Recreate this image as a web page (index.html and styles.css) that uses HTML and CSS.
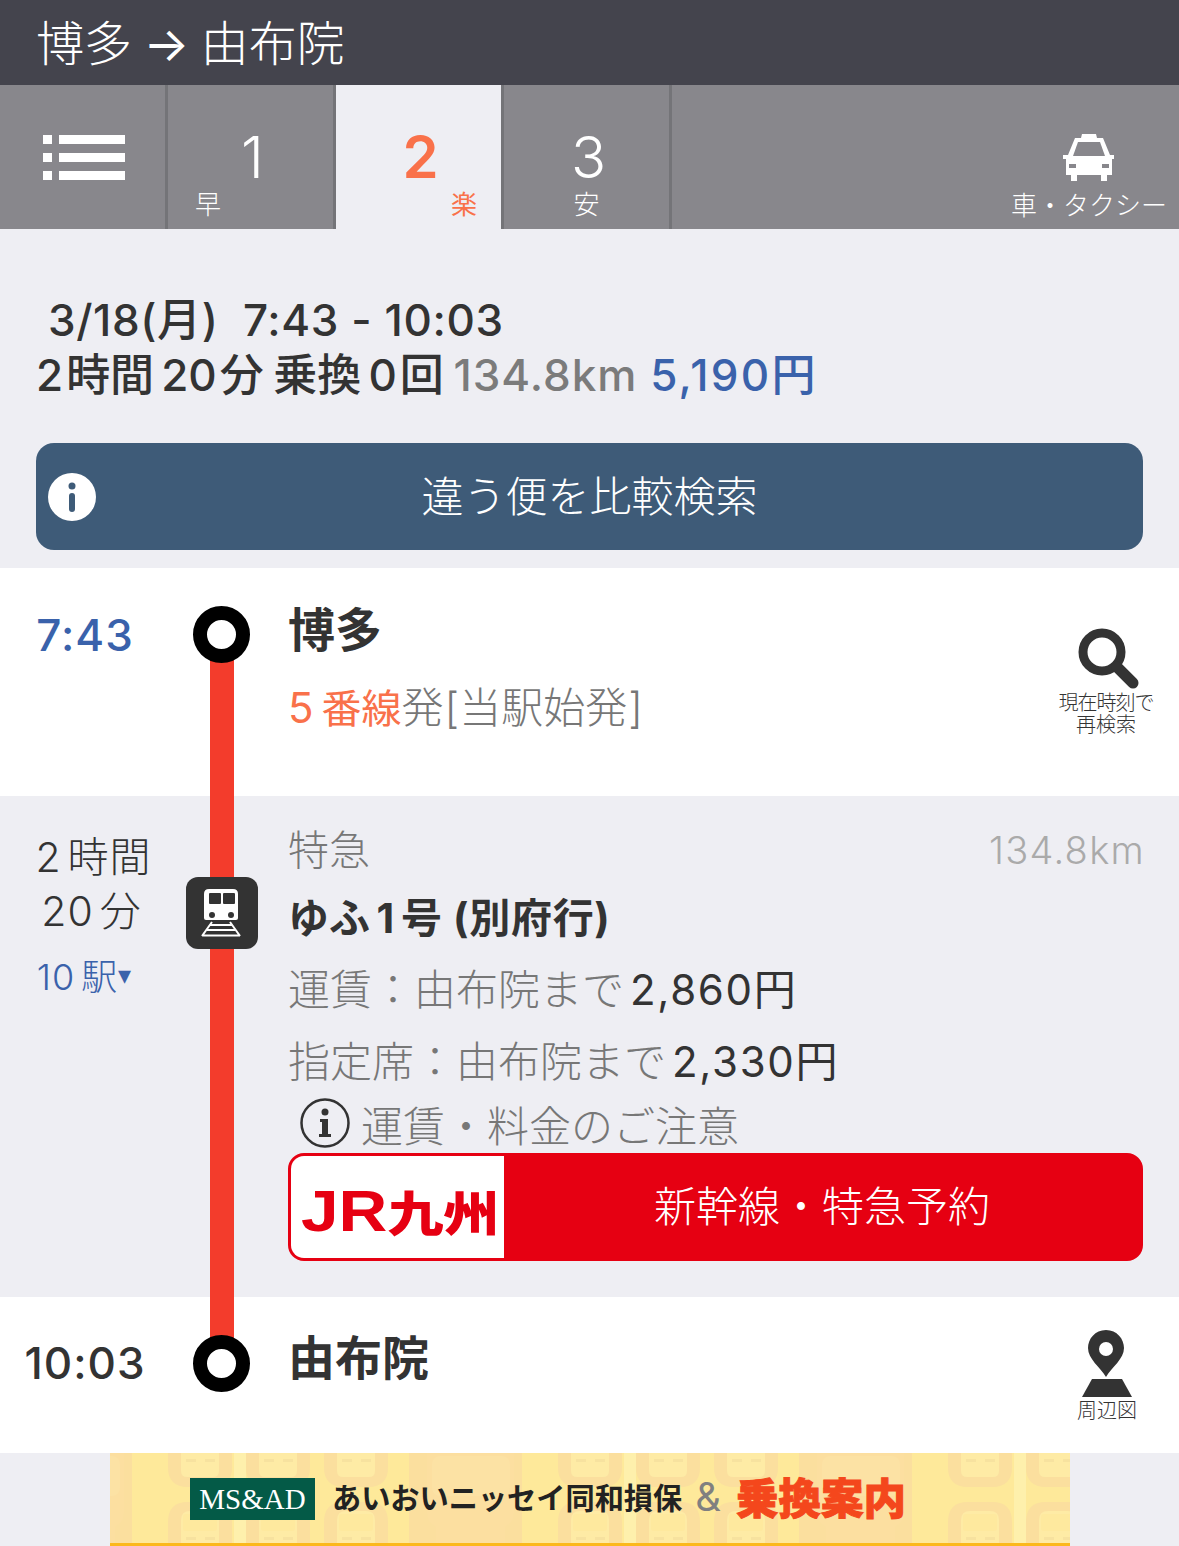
FILE: index.html
```html
<!DOCTYPE html>
<html lang="ja">
<head>
    <meta charset="UTF-8">
    <meta name="viewport" content="width=device-width, initial-scale=1.0">
    <title>博多 → 由布院</title>
    <link rel="stylesheet" href="styles.css">
</head>

<body>
    <header class="top-bar">博多 <span class="top-arrow">→</span> 由布院</header>

    <nav class="tabs">
        <div class="tab tab-menu">
            <svg width="82" height="46" viewBox="0 0 82 46" fill="#fff">
                <rect x="0" y="0" width="9" height="9"/>
                <rect x="16" y="0" width="66" height="9"/>
                <rect x="0" y="18" width="9" height="9"/>
                <rect x="16" y="18" width="66" height="9"/>
                <rect x="0" y="36" width="9" height="9"/>
                <rect x="16" y="36" width="66" height="9"/>
            </svg>
        </div>
        <div class="tab tab-route label-left">
            <span class="tab-num">1</span>
            <span class="tab-label">早</span>
        </div>
        <div class="tab tab-route tab-active label-right">
            <span class="tab-num">2</span>
            <span class="tab-label">楽</span>
        </div>
        <div class="tab tab-route tab-third label-center">
            <span class="tab-num">3</span>
            <span class="tab-label">安</span>
        </div>
        <div class="tab tab-taxi">
            <svg width="52" height="48" viewBox="0 0 52 48" fill="#fff">
                <path d="M19 0h14l1 4h6l7 17h4v4h-2v16h-5v6h-6v-6H14v6H8v-6H3V25H0v-4h5l7-17h6z"/>
                <path d="M15 8h22l5 14H10z" fill="#88878c"/>
                <rect x="6" y="30" width="7" height="4" fill="#88878c"/>
                <rect x="39" y="30" width="7" height="4" fill="#88878c"/>
            </svg>
            <span class="taxi-label">車・タクシー</span>
        </div>
    </nav>

    <section class="summary">
        <p class="summary-date">3/18(月) &nbsp;7:43 - 10:03</p>
        <p class="summary-info"><span class="num">2</span>時間<span class="num">20</span>分 乗換<span class="num">0</span>回 <span class="dist">134.8km</span> <span class="fare">5,190円</span></p>
        <button class="compare-btn">
            <svg class="compare-icon" width="50" height="50" viewBox="0 0 50 50">
                <circle cx="25" cy="25" r="24" fill="#fff"/>
                <circle cx="25" cy="14" r="3.5" fill="#3e5b78"/>
                <rect x="22" y="21" width="6" height="19" rx="3" fill="#3e5b78"/>
            </svg>
            <span class="compare-text">違う便を比較検索</span>
        </button>
    </section>

    <main class="timeline">
        <div class="rail-line"></div>

        <div class="row row-start">
            <div class="time time-dep">7:43</div>
            <div class="rail"><div class="node"></div></div>
            <div class="body">
                <div class="station">博多</div>
                <div class="platform"><span class="orange"><span class="plat-num">5</span>番線</span>発<span class="bracket">[</span>当駅始発<span class="bracket">]</span></div>
            </div>
            <div class="action action-search">
                <svg width="62" height="62" viewBox="0 0 62 62">
                    <circle cx="24" cy="24" r="19" fill="none" stroke="#333" stroke-width="9"/>
                    <path d="M39 39l16 16" stroke="#333" stroke-width="11" stroke-linecap="round"/>
                </svg>
                <span class="action-text">現在時刻で<br>再検索</span>
            </div>
        </div>

        <div class="row row-train">
            <div class="time time-ride">
                <div class="ride-h"><span class="num-left">2</span>時間</div>
                <div class="ride-m"><span class="num-left">20</span>分</div>
                <div class="ride-stops"><span class="num-left">10</span>駅<span class="stops-arrow">▾</span></div>
            </div>
            <div class="rail">
                <div class="train-badge">
                    <svg width="44" height="48" viewBox="0 0 44 48">
                        <path d="M9 0h24q5 0 5 5v24q0 2-2 2H6q-2 0-2-2V5q0-5 5-5z" fill="#fff"/>
                        <rect x="9" y="4" width="12" height="11" rx="1" fill="#333"/>
                        <rect x="23" y="4" width="12" height="11" rx="1" fill="#333"/>
                        <circle cx="12" cy="26" r="3" fill="#333"/>
                        <circle cx="31" cy="26" r="3" fill="#333"/>
                        <path d="M12 33L2 47M30 33l10 14M10 36h22M7 41h28M2 46.500h38" fill="none" stroke="#fff" stroke-width="2"/>
                    </svg>
                </div>
            </div>
            <div class="body">
                <div class="train-head"><span>特急</span><span class="train-km">134.8km</span></div>
                <div class="train-name">ゆふ<span class="num">1</span>号 (別府行)</div>
                <div class="fare-row">運賃：由布院まで<span class="fare-val">2,860円</span></div>
                <div class="fare-row">指定席：由布院まで<span class="fare-val">2,330円</span></div>
                <div class="fare-note">
                    <svg width="50" height="50" viewBox="0 0 50 50">
                        <circle cx="25" cy="25" r="23.500" fill="none" stroke="#333" stroke-width="2.500"/>
                        <circle cx="25" cy="14" r="3.500" fill="#333"/>
                        <path d="M20 21h8v15h3v3H19v-3h3V24h-2z" fill="#333"/>
                    </svg>
                    <span>運賃・料金のご注意</span>
                </div>
                <div class="jr-btn">
                    <div class="jr-logo"><span class="jr-mark"><span class="jr-latin">JR</span>九州</span></div>
                    <div class="jr-text">新幹線・特急予約</div>
                </div>
            </div>
        </div>

        <div class="row row-end">
            <div class="time time-arr">10:03</div>
            <div class="rail"><div class="node"></div></div>
            <div class="body">
                <div class="station station-end">由布院</div>
            </div>
            <div class="action action-map">
                <svg width="52" height="68" viewBox="0 0 52 68" fill="#333">
                    <path d="M25 0C14 0 7 9 7 18c0 11 12 19 18 29 6-10 18-18 18-29C43 9 36 0 25 0z"/>
                    <circle cx="25" cy="19" r="7" fill="#fff"/>
                    <path d="M11 49h30l10 18H1z"/>
                </svg>
                <span class="action-text">周辺図</span>
            </div>
        </div>
    </main>

    <aside class="banner">
        <svg class="banner-bg" width="960" height="93">
            <defs>
                <g id="train-top">
                    <path d="M0 0h64v14q0 20-20 20H20Q0 34 0 14z" fill="#fbdf9e"/>
                    <path d="M13 0h38v18q0 6-6 6H19q-6 0-6-6z" fill="#feeba5"/>
                    <rect x="18" y="6" width="10" height="3" fill="#f7e29f"/>
                    <rect x="37" y="6" width="10" height="3" fill="#f7e29f"/>
                </g>
                <g id="train-bottom">
                    <path d="M0 90V69q0-20 20-20h24q20 0 20 20v21z" fill="#fbdf9e"/>
                    <path d="M13 90V67q0-9 9-9h20q9 0 9 9v23z" fill="#feeba5"/>
                    <rect x="15" y="61" width="34" height="17" rx="3" fill="#fee99e"/>
                    <rect x="18" y="84" width="10" height="3" fill="#f7e29f"/>
                    <rect x="37" y="84" width="10" height="3" fill="#f7e29f"/>
                </g>
                <pattern id="tile" x="58" y="0" width="390" height="90" patternUnits="userSpaceOnUse">
                    <rect x="0" y="0" width="390" height="90" fill="#fee99a"/>
                    <rect x="66" y="0" width="12" height="90" fill="#fef0ac"/>
                    <use href="#train-top" x="0" y="0"/>
                    <use href="#train-top" x="78" y="0"/>
                    <use href="#train-top" x="156" y="0"/>
                    <use href="#train-bottom" x="0" y="0"/>
                    <use href="#train-bottom" x="78" y="0"/>
                    <use href="#train-bottom" x="156" y="0"/>
                    <rect x="241" y="0" width="113" height="90" fill="#fbdf9e"/>
                    <path d="M259 0h87v60q0 9-9 14v16h-69V74q-9-5-9-14z" fill="#fcdfa0"/>
                    <rect x="264" y="3" width="78" height="40" rx="8" fill="#fce2a4"/>
                </pattern>
            </defs>
            <rect width="960" height="90" fill="url(#tile)"/>
            <rect y="90" width="960" height="3" fill="#fbb81c"/>
        </svg>
        <div class="ad-logo">MS&amp;AD</div>
        <div class="ad-name">あいおいニッセイ同和損保</div>
        <div class="ad-amp">&amp;</div>
        <div class="ad-brand">乗換案内</div>
    </aside>
</body>
</html>
```

FILE: styles.css
```css
 /*page*/
* {
    box-sizing: border-box;
}
html, body {
    margin: 0;
    padding: 0;
}
body {
    width: 1179px;
    height: 1546px;
    overflow: hidden;
    background-color: #eeeef3;
    color: #333;
    font-family: Inter, "Noto Sans CJK JP", sans-serif;
}
p {
    margin: 0;
}
.num {
    margin: 0 6px 0 6px;
}
.num-left {
    margin-right: 6px;
}

 /*header*/
.top-bar {
    height: 85px;
    padding: 2px 0 0 36px;
    background-color: #44444d;
    color: #fff;
    font-size: 48px;
    font-weight: 300;
    line-height: 83px;
    word-spacing: -2px;
    white-space: nowrap;
}
.top-arrow {
    font-weight: 400;
}

 /*tabs*/
.tabs {
    display: flex;
    height: 144px;
    background-color: #88878c;
    color: #fff;
}
.tab {
    height: 144px;
}
.tab-menu {
    display: flex;
    justify-content: center;
    width: 168px;
    padding: 50px 0 0 3px;
    border-right: 3px solid #747478;
}
.tab-route {
    display: flex;
    flex-direction: column;
    width: 168px;
    border-right: 3px solid #747478;
}
.tab-active {
    width: 165px;
    border-right: 0;
    background-color: #eeeef3;
    color: #f9714a;
}
.tab-third {
    width: 171px;
    border-left: 3px solid #747478;
}
.tab-num {
    margin-top: 37px;
    padding-left: 4px;
    font-size: 58px;
    font-weight: 300;
    line-height: 70px;
    text-align: center;
}
.tab-active .tab-num {
    font-weight: 600;
}
.tab-label {
    font-size: 26px;
    font-weight: 300;
    line-height: 30px;
    margin-top: -2px;
}
.tab-active .tab-label {
    font-weight: 400;
}
.label-left .tab-label {
    padding-left: 27px;
}
.label-right .tab-label {
    text-align: right;
    padding-right: 24px;
}
.label-center .tab-label {
    text-align: center;
}
.tab-taxi {
    flex: 1;
    display: flex;
    flex-direction: column;
    align-items: flex-end;
    padding: 49px 12px 0 0;
}
.tab-taxi svg {
    margin-right: 52px;
}
.taxi-label {
    font-size: 26px;
    font-weight: 300;
    line-height: 30px;
    margin-top: 9px;
    white-space: nowrap;
}

 /*summary*/
.summary {
    height: 339px;
    padding: 63px 36px 0;
}
.summary-date {
    padding-left: 12px;
    font-size: 44px;
    font-weight: 500;
    letter-spacing: 0.6px;
    line-height: 56px;
    white-space: nowrap;
}
.summary-info {
    font-size: 44px;
    font-weight: 500;
    line-height: 54px;
    word-spacing: -2px;
    white-space: nowrap;
}
.summary-info .num {
    margin: 0 3px 0 7px;
}
.summary-info .num:first-child {
    margin-left: 0;
}
.dist {
    color: #7b7b7b;
    letter-spacing: 1px;
}
.fare {
    margin-left: 3px;
    color: #3a62ab;
    letter-spacing: 2.300px;
}
.compare-btn {
    position: relative;
    display: block;
    width: 1107px;
    height: 107px;
    margin-top: 41px;
    padding: 0 0 6px 0;
    border: 0;
    border-radius: 18px;
    background-color: #3e5b78;
    color: #fff;
    font-family: inherit;
    font-size: 42px;
    font-weight: 300;
}
.compare-icon {
    position: absolute;
    top: 29px;
    left: 11px;
}

 /*timeline*/
.timeline {
    position: relative;
}
.rail-line {
    position: absolute;
    z-index: 1;
    top: 67px;
    left: 210px;
    width: 24px;
    height: 728px;
    background-color: #f33c2c;
}
.row {
    position: relative;
    display: grid;
    grid-template-columns: 170px 16px 72px 32px 1fr;
}
.row-start {
    height: 228px;
    background-color: #fff;
}
.row-train {
    height: 501px;
    background-color: #eeeef3;
}
.row-end {
    height: 156px;
    background-color: #fff;
}
.time {
    grid-column: 1;
    text-align: center;
    white-space: nowrap;
    font-size: 44px;
    font-weight: 500;
    letter-spacing: 1px;
}
.time-dep {
    color: #3a62ab;
    line-height: 56px;
    padding-top: 39px;
}
.time-arr {
    line-height: 56px;
    padding-top: 38px;
}
.rail {
    grid-column: 3;
    position: relative;
    z-index: 2;
    display: flex;
    justify-content: center;
}
.node {
    width: 57px;
    height: 57px;
    border: 14px solid #000;
    border-radius: 50%;
    background-color: #fff;
    margin-top: 38px;
    margin-right: 1px;
}
.body {
    grid-column: 5;
    min-width: 0;
    margin-left: -2px;
    padding-right: 34px;
}
.station {
    font-size: 47px;
    font-weight: 700;
    line-height: 60px;
    margin-top: 32px;
}
.station-end {
    margin-top: 31px;
}
.platform {
    margin-top: 20px;
    color: #777;
    font-size: 42px;
    font-weight: 300;
    line-height: 56px;
    white-space: nowrap;
}
.orange {
    color: #f9714a;
    font-size: 40px;
    font-weight: 400;
}
.plat-num {
    margin-right: 8px;
    font-size: 42px;
}
.bracket {
    margin-left: 1px;
}
.action {
    position: absolute;
    display: flex;
    flex-direction: column;
    align-items: center;
    width: 120px;
    color: #333;
}
.action-text {
    font-size: 20px;
    font-weight: 300;
    line-height: 22px;
    text-align: center;
    white-space: nowrap;
}
.action-text::first-line {
    letter-spacing: -1px;
}
.action-search {
    top: 60px;
    left: 1046px;
}
.action-search svg {
    margin-left: 5px;
}
.action-search .action-text {
    margin-top: 2px;
}
.action-map {
    top: 33px;
    left: 1047px;
}
.action-map .action-text {
    margin-top: 2px;
}
.action-map .action-text::first-line {
    letter-spacing: 0;
}

 /*train segment*/
.time-ride {
    padding-left: 17px;
    font-weight: 300;
    font-size: 41px;
}
.ride-h {
    line-height: 54px;
    margin-top: 34px;
}
.ride-m {
    line-height: 54px;
    padding-right: 4px;
}
.ride-stops {
    margin-top: 12px;
    padding-right: 18px;
    color: #3a62ab;
    font-size: 36px;
    line-height: 54px;
}
.stops-arrow {
    position: relative;
    top: -6px;
    font-size: 26px;
}
.train-badge {
    display: flex;
    align-items: center;
    justify-content: center;
    width: 72px;
    height: 72px;
    margin-top: 81px;
    border-radius: 12px;
    background-color: #333;
}
.train-head {
    display: flex;
    justify-content: space-between;
    margin-top: 27px;
    color: #777;
    font-size: 41px;
    font-weight: 300;
    line-height: 54px;
}
.train-km {
    color: #aaa;
    font-size: 38px;
    letter-spacing: 1.3px;
}
.train-name {
    margin-top: 14px;
    font-size: 41px;
    font-weight: 700;
    letter-spacing: 0.7px;
    line-height: 54px;
    white-space: nowrap;
}
.fare-row {
    margin-top: 18px;
    color: #777;
    font-size: 42px;
    font-weight: 300;
    line-height: 54px;
    white-space: nowrap;
}
.fare-val {
    margin-left: 6px;
    color: #333;
    font-weight: 400;
    letter-spacing: 1.7px;
}
.fare-note {
    display: flex;
    align-items: center;
    gap: 11px;
    height: 50px;
    margin-top: 9px;
    padding-left: 12px;
    color: #777;
    font-size: 42px;
    font-weight: 300;
    white-space: nowrap;
}
.jr-btn {
    display: flex;
    width: 855px;
    height: 108px;
    margin-top: 5px;
    overflow: hidden;
    border: 3px solid #e60012;
    border-radius: 16px;
    background-color: #e60012;
}
.jr-logo {
    width: 213px;
    padding: 10px 0 0 10px;
    background-color: #fff;
    color: #e60012;
    font-size: 48px;
    font-weight: 900;
    line-height: 90px;
    white-space: nowrap;
}
.jr-mark {
    display: inline-block;
    transform: scaleX(1.165);
    transform-origin: left center;
}
.jr-latin {
    font-family: "Liberation Sans", sans-serif;
    font-weight: 700;
    font-size: 58px;
}
.jr-text {
    flex: 1;
    color: #fff;
    font-size: 42px;
    font-weight: 300;
    line-height: 102px;
    text-align: center;
}

 /*banner*/
.banner {
    position: relative;
    display: flex;
    align-items: center;
    width: 960px;
    height: 93px;
    margin-left: 110px;
    padding: 0 0 2px 80px;
    overflow: hidden;
}
.banner-bg {
    position: absolute;
    top: 0;
    left: 0;
}
.ad-logo, .ad-name, .ad-amp, .ad-brand {
    position: relative;
    white-space: nowrap;
}
.ad-logo {
    width: 125px;
    height: 42px;
    background-color: #045a47;
    color: #fff;
    font-family: "Liberation Serif", serif;
    font-size: 29px;
    line-height: 42px;
    text-align: center;
}
.ad-name {
    top: -3px;
    margin-left: 17px;
    color: #222;
    font-size: 29.200px;
    font-weight: 700;
}
.ad-amp {
    top: -2px;
    margin-left: 13px;
    color: #808080;
    font-size: 40px;
}
.ad-brand {
    top: -3px;
    margin-left: 15px;
    color: #f4471c;
    font-size: 42.500px;
    font-weight: 900;
    -webkit-text-stroke: 1px #f4471c;
}
```
